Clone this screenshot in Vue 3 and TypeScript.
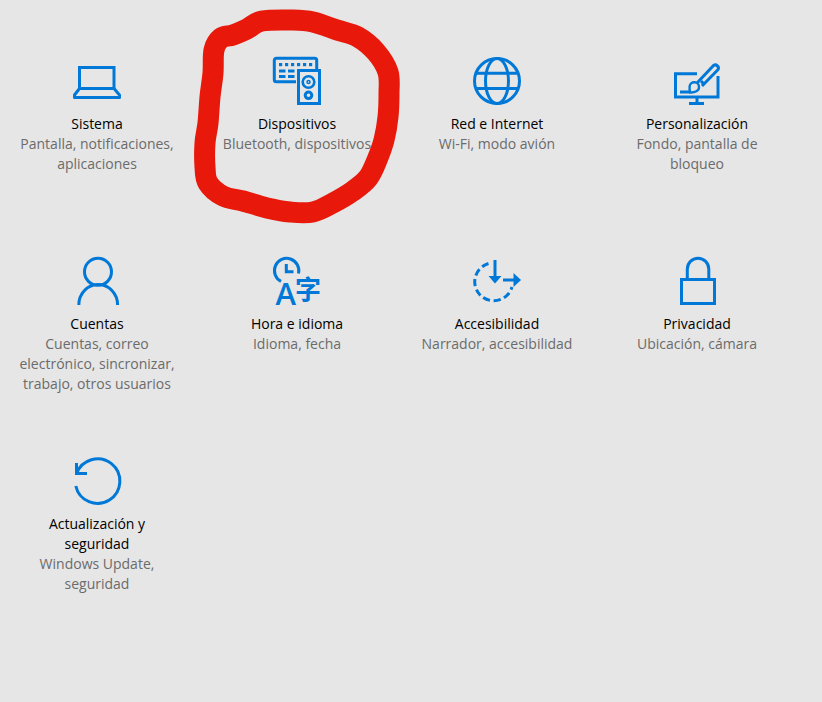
<template>
  <div class="page">
    <div class="grid">
      <div v-for="item in items" :key="item.key" class="tile">
        <svg class="icon" width="48" height="48" viewBox="0 0 48 48" fill="none" stroke="currentColor" stroke-width="3">
          <template v-if="item.key === 'sistema'">
            <path d="M6.500 32V10.500H41V32" />
            <path d="M6.500 31.500L1.500 38V40.500H46.500V38L41 31.500Z" stroke-linejoin="round" />
          </template>
          <template v-else-if="item.key === 'dispositivos'">
            <path d="M23 24.700H3.300a2 2 0 0 1-2-2V3.300a2 2 0 0 1 2-2H41.700a2 2 0 0 1 2 2V12" />
            <rect x="25.500" y="13.500" width="21" height="33" />
            <circle cx="35.500" cy="25" r="5.800" stroke-width="2.600" />
            <circle cx="35.500" cy="25" r="1.500" stroke-width="1.500" />
            <circle cx="35.500" cy="38.300" r="3.300" />
            <g fill="currentColor" stroke="none">
              <rect v-for="x in [6, 12, 18, 24, 30, 36]" :key="x" :x="x" y="6" width="3.200" height="3.200" />
              <rect x="6" y="12.500" width="6.500" height="3" />
              <rect x="15" y="12.500" width="6.500" height="3" />
              <rect x="6" y="18" width="6.500" height="3" />
              <rect x="15" y="18" width="6.500" height="3" />
            </g>
          </template>
          <template v-else-if="item.key === 'red'">
            <circle cx="24" cy="24" r="22.500" />
            <ellipse cx="24" cy="24" rx="11.500" ry="22.500" />
            <path d="M3 16.300H45M3 31.500H45" />
          </template>
          <template v-else-if="item.key === 'personalizacion'">
            <path d="M24 16.700H2.500V40H45V19" />
            <path d="M24 40V46M16 46.500H31" />
            <path d="M7 35H17" />
            <path d="M24.500 25.500L40.500 8.500a3.100 3.100 0 0 1 4.400 4.200L29 29" stroke-linejoin="round" />
            <path d="M17 35.500c5 .4 9-1.800 9-5.200a4.700 4.700 0 0 0-9.400-.6c-.2 2.200 0 3.900.4 5.800Z" stroke-width="2.400" stroke-linejoin="round" />
            <path d="M28 24l2.500 2.600" />
          </template>
          <template v-else-if="item.key === 'cuentas'">
            <circle cx="25" cy="14.800" r="13.500" />
            <path d="M5.800 48a19.400 20.500 0 0 1 38.800 0" />
          </template>
          <template v-else-if="item.key === 'hora'">
            <path d="M8 24.400A12.200 12.200 0 1 1 25.500 16.500" />
            <path d="M13.300 7V14.700H20.500" />
            <text class="glyph-a" x="2.500" y="47.500" fill="currentColor" stroke="none">A</text>
            <text class="glyph-zi" x="22" y="42" fill="currentColor" stroke="none">字</text>
          </template>
          <template v-else-if="item.key === 'accesibilidad'">
            <path d="M15.500 6.500A19 19 0 1 0 39 30" stroke-dasharray="7.200 3.600" />
            <path d="M22 3V22" />
            <path d="M15.500 19H28.500L22 26.500Z" fill="currentColor" stroke="none" />
            <path d="M30 23H43" />
            <path d="M40.500 16L48 23L40.500 30Z" fill="currentColor" stroke="none" />
          </template>
          <template v-else-if="item.key === 'privacidad'">
            <path d="M14.300 21V12a10.750 10.750 0 0 1 21.500 0V21" />
            <rect x="8.500" y="22.500" width="33" height="24" />
          </template>
          <template v-else>
            <path d="M3.500 16.800A22.300 22.300 0 1 1 2.800 29" />
            <path d="M3.500 6V16.500H14" />
          </template>
        </svg>
        <div class="title">{{ item.title }}</div>
        <div class="sub">{{ item.sub }}</div>
      </div>
    </div>
    <svg class="scribble" width="822" height="702" viewBox="0 0 822 702" fill="none">
      <path :d="scribble" />
    </svg>
  </div>
</template>

<script setup lang="ts">
const items = [
  { key: 'sistema', title: 'Sistema', sub: 'Pantalla, notificaciones, aplicaciones' },
  { key: 'dispositivos', title: 'Dispositivos', sub: 'Bluetooth, dispositivos' },
  { key: 'red', title: 'Red e Internet', sub: 'Wi-Fi, modo avión' },
  { key: 'personalizacion', title: 'Personalización', sub: 'Fondo, pantalla de bloqueo' },
  { key: 'cuentas', title: 'Cuentas', sub: 'Cuentas, correo electrónico, sincronizar, trabajo, otros usuarios' },
  { key: 'hora', title: 'Hora e idioma', sub: 'Idioma, fecha' },
  { key: 'accesibilidad', title: 'Accesibilidad', sub: 'Narrador, accesibilidad' },
  { key: 'privacidad', title: 'Privacidad', sub: 'Ubicación, cámara' },
  { key: 'actualizacion', title: 'Actualización y seguridad', sub: 'Windows Update, seguridad' },
]

// marker stroke round "Dispositivos", traced by hand
const pts = [
  [233, 35], [247, 29], [262, 21], [293, 20], [313, 22], [337, 30], [358, 37], [376, 52], [388, 72],
  [389, 93], [388, 117], [384, 140], [377, 160], [368, 178], [353, 191], [333, 203], [313, 212],
  [290, 212], [267, 208], [243, 201], [223, 196], [208, 183], [205, 167], [205, 143], [208, 123],
  [210, 97], [213, 73], [214, 50], [221, 38],
]

// closed Catmull-Rom through the points, so the line has no corners
const n = pts.length
const scribble = `M${pts[0].join(' ')}` + pts.map((p, i) => {
  const a = pts[(i - 1 + n) % n]
  const b = pts[(i + 1) % n]
  const c = pts[(i + 2) % n]
  const c1 = [p[0] + (b[0] - a[0]) / 6, p[1] + (b[1] - a[1]) / 6]
  const c2 = [b[0] - (c[0] - p[0]) / 6, b[1] - (c[1] - p[1]) / 6]
  return `C${c1.join(' ')} ${c2.join(' ')} ${b.join(' ')}`
}).join('')
</script>

<style>
html, body {
  background: #e6e6e6;
}
</style>

<style scoped>
.page {
  position: relative;
  width: 822px;
  height: 702px;
  overflow: hidden;
  background: #e6e6e6;
  font-family: "Open Sans", "Noto Sans", sans-serif;
  font-size: 14px;
  line-height: 20px;
}

.grid {
  display: grid;
  grid-template-columns: repeat(4, 194px);
  grid-auto-rows: 200px;
  column-gap: 6px;
  padding-top: 57px;
}

.tile {
  display: flex;
  flex-direction: column;
  align-items: center;
  text-align: center;
}

.icon {
  color: #0078d7;
  margin-bottom: 9px;
  flex: none;
  overflow: visible;
}

.title {
  color: #000;
  width: 160px;
}

.sub {
  color: #6b6b6b;
  width: 162px;
}

.glyph-a {
  font-family: "Open Sans", sans-serif;
  font-size: 31px;
  font-weight: 600;
}

.glyph-zi {
  font-family: "Noto Sans CJK SC", sans-serif;
  font-size: 26px;
  font-weight: 700;
}

.scribble {
  position: absolute;
  left: 0;
  top: 0;
  stroke: #e8190b;
  stroke-width: 21;
  stroke-linejoin: round;
  stroke-linecap: round;
}
</style>
